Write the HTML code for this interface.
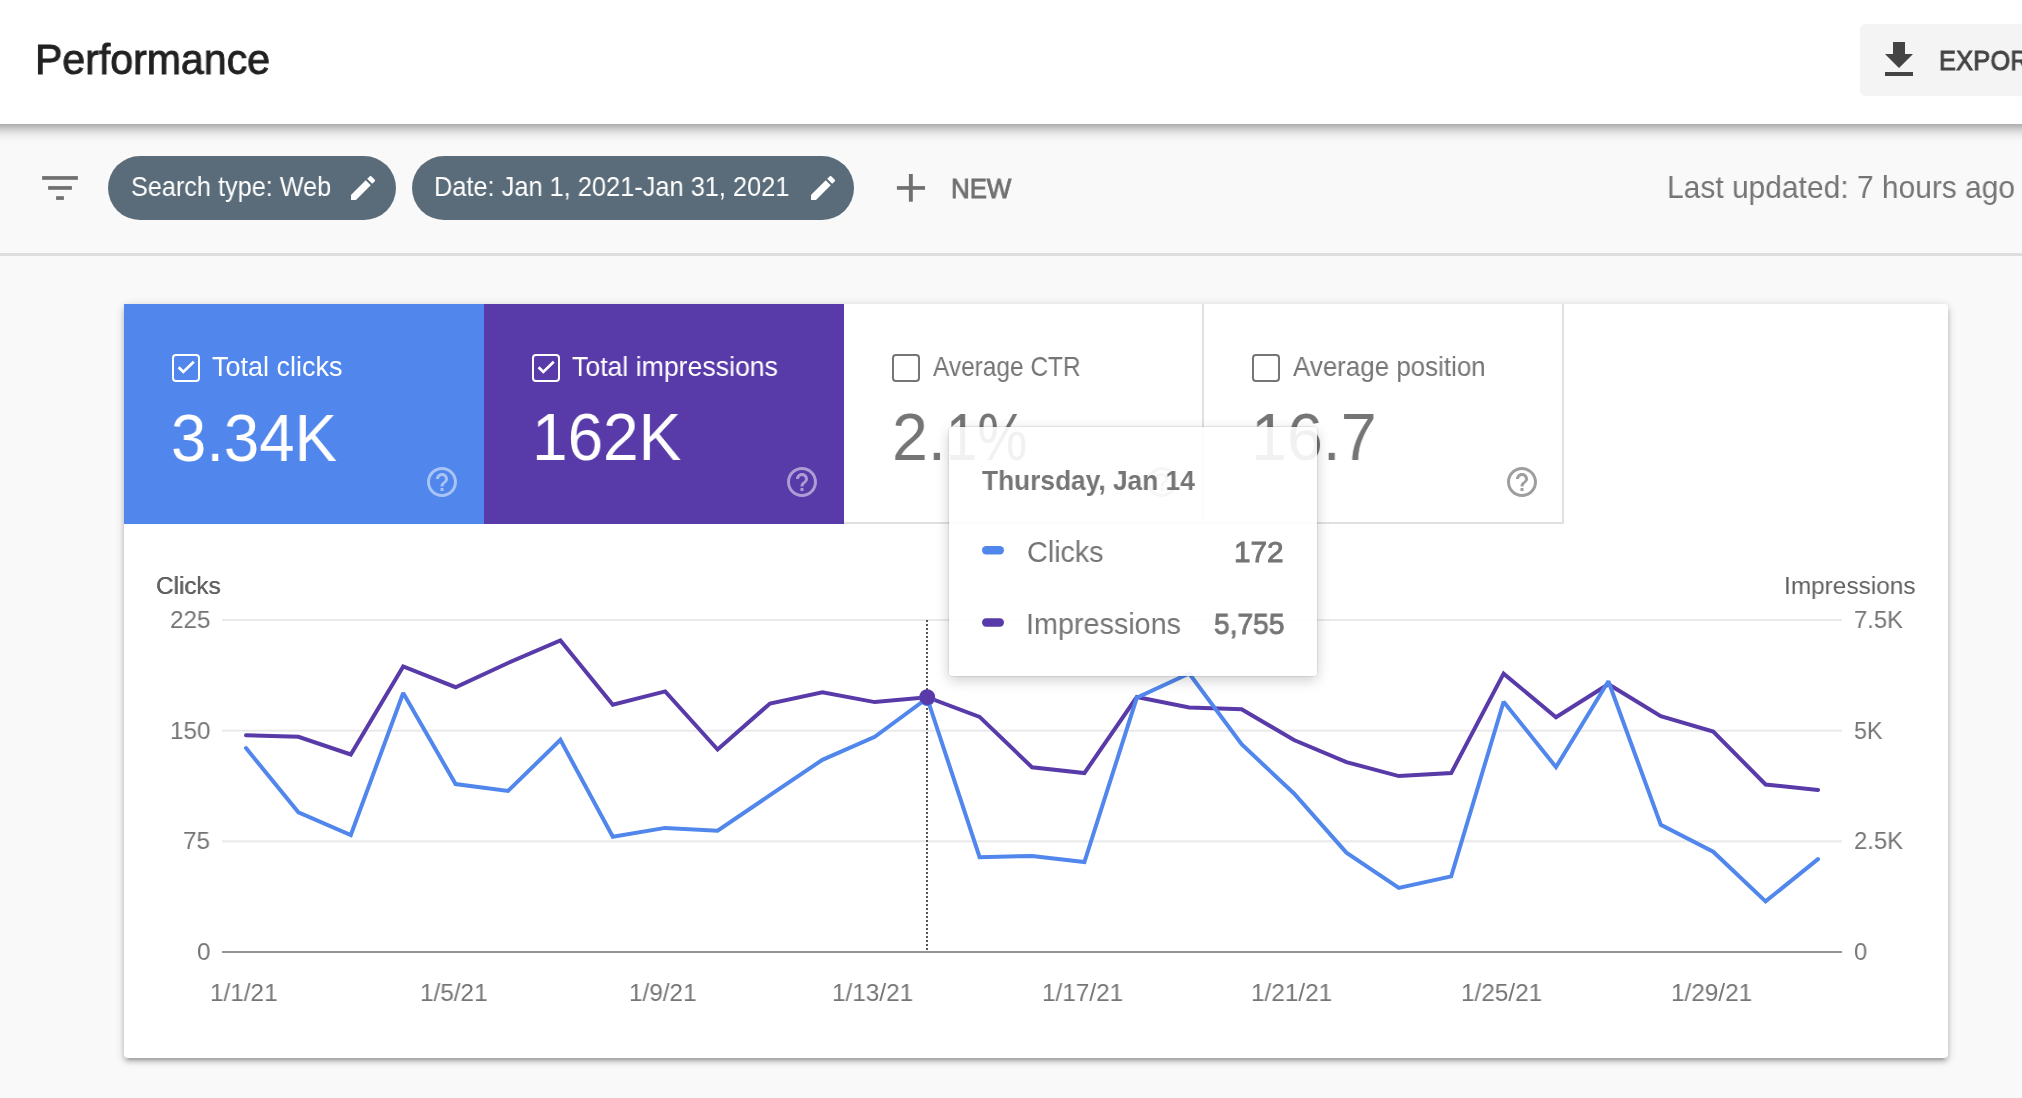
<!DOCTYPE html>
<html><head><meta charset="utf-8"><title>Performance</title>
<style>
html,body{margin:0;padding:0;}
body{width:2022px;height:1098px;overflow:hidden;position:relative;background:#f9f9f9;font-family:"Liberation Sans",sans-serif;}
.abs{position:absolute;left:0;top:0;}
.t{position:absolute;white-space:nowrap;transform-origin:0 0;will-change:transform;}
#hdr{position:absolute;left:-40px;top:0;width:2102px;height:124px;background:#fff;box-shadow:0 4px 8px -2px rgba(0,0,0,.2),0 8px 10px 0 rgba(0,0,0,.14),0 2px 20px 0 rgba(0,0,0,.12);z-index:2;}
#exp{position:absolute;left:1860px;top:24px;width:200px;height:72px;border-radius:6px;background:#f4f4f4;}
#rule{position:absolute;left:0;top:253px;width:2022px;height:3px;background:#dedede;}
.chip{position:absolute;top:156px;height:64px;border-radius:32px;background:#5a6c79;}
#panel{position:absolute;left:124px;top:304px;width:1824px;height:754px;background:#fff;border-radius:4px;box-shadow:0 4px 4px 0 rgba(0,0,0,.14),0 6px 2px -4px rgba(0,0,0,.12),0 2px 10px 0 rgba(0,0,0,.2);}
.card{position:absolute;top:304px;height:220px;width:360px;box-sizing:border-box;}
#tip{position:absolute;left:949px;top:427px;width:368px;height:249px;box-sizing:border-box;border-radius:4px;background:rgba(255,255,255,.9);box-shadow:0 0 0 1px rgba(0,0,0,.07),0 4px 14px rgba(0,0,0,.2);z-index:5;}
#tipc{position:absolute;left:0;top:0;z-index:6;}
</style></head><body>
<div id="hdr"></div>
<div class="abs" style="z-index:3">
 <div class="t" style="left:35.38px;top:39.00px;font-size:42.15px;line-height:42.15px;font-weight:400;color:#212121;transform:scaleX(0.9742);-webkit-text-stroke:0.9px #212121;">Performance</div>
 <div id="exp"></div>
 <svg class="abs" style="left:1875px;top:35.7px" width="48" height="48" viewBox="0 0 24 24"><path fill="#444" d="M19 9h-4V3H9v6H5l7 7 7-7zM5 18v2h14v-2H5z"/></svg>
 <div class="t" style="left:1938.82px;top:48.00px;font-size:26.90px;line-height:26.90px;font-weight:400;color:#444444;transform:scaleX(0.9400);-webkit-text-stroke:1px #444444;letter-spacing:0.3px;">EXPORT</div>
</div>
<svg class="abs" width="100" height="220"><g fill="#707070"><rect x="42.1" y="176.1" width="35.8" height="3.7"/><rect x="48.1" y="186.1" width="23.8" height="3.7"/><rect x="56.1" y="196.2" width="7.8" height="3.7"/></g></svg>
<div class="chip" style="left:108px;width:288px"></div>
<div class="chip" style="left:412px;width:442px"></div>
<div class="t" style="left:130.96px;top:173.00px;font-size:27.40px;line-height:27.40px;font-weight:400;color:#ffffff;transform:scaleX(0.9215);">Search type: Web</div><div class="t" style="left:433.95px;top:173.00px;font-size:27.40px;line-height:27.40px;font-weight:400;color:#ffffff;transform:scaleX(0.9263);">Date: Jan 1, 2021-Jan 31, 2021</div>
<svg class="abs" style="left:346.8px;top:171.6px" width="32" height="32" viewBox="0 0 24 24"><path fill="#fff" d="M3 17.25V21h3.75L17.81 9.94l-3.75-3.75L3 17.25zM20.71 7.04c.39-.39.39-1.02 0-1.41l-2.34-2.34c-.39-.39-1.02-.39-1.41 0l-1.83 1.83 3.75 3.75 1.83-1.83z"/></svg>
<svg class="abs" style="left:806.6px;top:171.6px" width="32" height="32" viewBox="0 0 24 24"><path fill="#fff" d="M3 17.25V21h3.75L17.81 9.94l-3.75-3.75L3 17.25zM20.71 7.04c.39-.39.39-1.02 0-1.41l-2.34-2.34c-.39-.39-1.02-.39-1.41 0l-1.83 1.83 3.75 3.75 1.83-1.83z"/></svg>
<svg class="abs" width="960" height="220"><g fill="#707070"><rect x="896.9" y="186.1" width="28.1" height="3.7"/><rect x="908.9" y="174" width="3.9" height="27.7"/></g></svg>
<div class="t" style="left:950.70px;top:175.00px;font-size:27.20px;line-height:27.20px;font-weight:400;color:#707070;transform:scaleX(0.9492);-webkit-text-stroke:0.9px #707070;">NEW</div>
<div class="t" style="left:1666.98px;top:172.00px;font-size:31.90px;line-height:31.90px;font-weight:400;color:#757575;transform:scaleX(0.9393);">Last updated: 7 hours ago</div>
<div id="rule"></div>
<div id="panel"></div>
<div class="card" style="left:124px;background:#5187ec"></div>
<div class="card" style="left:484px;background:#583ba9"></div>
<div class="card" style="left:844px;border-right:2px solid #e0e0e0;border-bottom:2px solid #e0e0e0;width:360px"></div>
<div class="card" style="left:1204px;border-right:2px solid #e0e0e0;border-bottom:2px solid #e0e0e0;width:360px"></div>
<svg class="abs" style="left:172px;top:354px" width="28" height="28" viewBox="0 0 28 28"><rect x="1" y="1" width="26" height="26" rx="3" ry="3" fill="none" stroke="#fff" stroke-width="2"/><polyline points="6.6,13.3 11.3,17.9 21.8,7.7" fill="none" stroke="#fff" stroke-width="2.7"/></svg><div class="t" style="left:212.00px;top:354.00px;font-size:26.90px;line-height:26.90px;font-weight:400;color:#ffffff;transform:scaleX(1.0047);">Total clicks</div><div class="t" style="left:171.27px;top:404.00px;font-size:67.30px;line-height:67.30px;font-weight:400;color:#ffffff;transform:scaleX(0.9436);">3.34K</div><svg class="abs" style="left:424.1px;top:464px" width="36" height="36" viewBox="0 0 24 24"><path fill="rgba(255,255,255,.5)" d="M11 18h2v-2h-2v2zm1-16C6.48 2 2 6.48 2 12s4.48 10 10 10 10-4.48 10-10S17.52 2 12 2zm0 18c-4.41 0-8-3.59-8-8s3.59-8 8-8 8 3.59 8 8-3.59 8-8 8zm0-14c-2.21 0-4 1.79-4 4h2c0-1.1.9-2 2-2s2 .9 2 2c0 2-3 1.75-3 5h2c0-2.25 3-2.5 3-5 0-2.21-1.79-4-4-4z"/></svg>
<svg class="abs" style="left:532px;top:354px" width="28" height="28" viewBox="0 0 28 28"><rect x="1" y="1" width="26" height="26" rx="3" ry="3" fill="none" stroke="#fff" stroke-width="2"/><polyline points="6.6,13.3 11.3,17.9 21.8,7.7" fill="none" stroke="#fff" stroke-width="2.7"/></svg><div class="t" style="left:571.91px;top:354.00px;font-size:26.90px;line-height:26.90px;font-weight:400;color:#ffffff;transform:scaleX(0.9913);">Total impressions</div><div class="t" style="left:531.75px;top:403.00px;font-size:67.30px;line-height:67.30px;font-weight:400;color:#ffffff;transform:scaleX(0.9497);">162K</div><svg class="abs" style="left:784px;top:464px" width="36" height="36" viewBox="0 0 24 24"><path fill="rgba(255,255,255,.5)" d="M11 18h2v-2h-2v2zm1-16C6.48 2 2 6.48 2 12s4.48 10 10 10 10-4.48 10-10S17.52 2 12 2zm0 18c-4.41 0-8-3.59-8-8s3.59-8 8-8 8 3.59 8 8-3.59 8-8 8zm0-14c-2.21 0-4 1.79-4 4h2c0-1.1.9-2 2-2s2 .9 2 2c0 2-3 1.75-3 5h2c0-2.25 3-2.5 3-5 0-2.21-1.79-4-4-4z"/></svg>
<svg class="abs" style="left:892px;top:354px" width="28" height="28" viewBox="0 0 28 28"><rect x="1" y="1" width="26" height="26" rx="3" ry="3" fill="none" stroke="#757575" stroke-width="2"/></svg><div class="t" style="left:932.70px;top:354.00px;font-size:26.90px;line-height:26.90px;font-weight:400;color:#757575;transform:scaleX(0.9087);">Average CTR</div><div class="t" style="left:891.73px;top:403.00px;font-size:67.30px;line-height:67.30px;font-weight:400;color:#757575;transform:scaleX(0.9574);">2.</div><div class="t" style="left:945.82px;top:403.00px;font-size:67.30px;line-height:67.30px;font-weight:400;color:#757575;transform:scaleX(0.8367);">1%</div><svg class="abs" style="left:1144px;top:464px" width="36" height="36" viewBox="0 0 24 24"><path fill="#9e9e9e" d="M11 18h2v-2h-2v2zm1-16C6.48 2 2 6.48 2 12s4.48 10 10 10 10-4.48 10-10S17.52 2 12 2zm0 18c-4.41 0-8-3.59-8-8s3.59-8 8-8 8 3.59 8 8-3.59 8-8 8zm0-14c-2.21 0-4 1.79-4 4h2c0-1.1.9-2 2-2s2 .9 2 2c0 2-3 1.75-3 5h2c0-2.25 3-2.5 3-5 0-2.21-1.79-4-4-4z"/></svg>
<svg class="abs" style="left:1252px;top:354px" width="28" height="28" viewBox="0 0 28 28"><rect x="1" y="1" width="26" height="26" rx="3" ry="3" fill="none" stroke="#757575" stroke-width="2"/></svg><div class="t" style="left:1292.70px;top:354.00px;font-size:26.90px;line-height:26.90px;font-weight:400;color:#757575;transform:scaleX(0.9641);">Average position</div><div class="t" style="left:1251.20px;top:403.00px;font-size:67.30px;line-height:67.30px;font-weight:400;color:#757575;transform:scaleX(0.9593);">16.7</div><svg class="abs" style="left:1504.1px;top:464px" width="36" height="36" viewBox="0 0 24 24"><path fill="#9e9e9e" d="M11 18h2v-2h-2v2zm1-16C6.48 2 2 6.48 2 12s4.48 10 10 10 10-4.48 10-10S17.52 2 12 2zm0 18c-4.41 0-8-3.59-8-8s3.59-8 8-8 8 3.59 8 8-3.59 8-8 8zm0-14c-2.21 0-4 1.79-4 4h2c0-1.1.9-2 2-2s2 .9 2 2c0 2-3 1.75-3 5h2c0-2.25 3-2.5 3-5 0-2.21-1.79-4-4-4z"/></svg>
<div class="t" style="left:155.82px;top:574.00px;font-size:24.80px;line-height:24.80px;font-weight:400;color:#616161;transform:scaleX(0.9781);">Clicks</div><div class="t" style="left:1783.93px;top:574.00px;font-size:24.80px;line-height:24.80px;font-weight:400;color:#616161;transform:scaleX(0.9840);">Impressions</div>
<div class="t" style="left:155.82px;top:574.00px;font-size:24.80px;line-height:24.80px;font-weight:400;color:#616161;transform:scaleX(0.9781);">Clicks</div><div class="t" style="left:196.56px;top:940.00px;font-size:24.80px;line-height:24.80px;font-weight:400;color:#757575;transform:scaleX(0.9800);">0</div><div class="t" style="left:182.84px;top:829.00px;font-size:24.80px;line-height:24.80px;font-weight:400;color:#757575;transform:scaleX(0.9800);">75</div><div class="t" style="left:170.10px;top:719.00px;font-size:24.80px;line-height:24.80px;font-weight:400;color:#757575;transform:scaleX(0.9800);">150</div><div class="t" style="left:170.10px;top:608.00px;font-size:24.80px;line-height:24.80px;font-weight:400;color:#757575;transform:scaleX(0.9800);">225</div><div class="t" style="left:1854.04px;top:940.00px;font-size:24.80px;line-height:24.80px;font-weight:400;color:#757575;transform:scaleX(0.9583);">0</div><div class="t" style="left:1854.04px;top:829.00px;font-size:24.80px;line-height:24.80px;font-weight:400;color:#757575;transform:scaleX(0.9612);">2.5K</div><div class="t" style="left:1854.06px;top:719.00px;font-size:24.80px;line-height:24.80px;font-weight:400;color:#757575;transform:scaleX(0.9414);">5K</div><div class="t" style="left:1854.04px;top:608.00px;font-size:24.80px;line-height:24.80px;font-weight:400;color:#757575;transform:scaleX(0.9592);">7.5K</div><div class="t" style="left:210.20px;top:981.00px;font-size:24.80px;line-height:24.80px;font-weight:400;color:#757575;transform:scaleX(0.9800);">1/1/21</div><div class="t" style="left:419.80px;top:981.00px;font-size:24.80px;line-height:24.80px;font-weight:400;color:#757575;transform:scaleX(0.9800);">1/5/21</div><div class="t" style="left:629.40px;top:981.00px;font-size:24.80px;line-height:24.80px;font-weight:400;color:#757575;transform:scaleX(0.9800);">1/9/21</div><div class="t" style="left:832.14px;top:981.00px;font-size:24.80px;line-height:24.80px;font-weight:400;color:#757575;transform:scaleX(0.9800);">1/13/21</div><div class="t" style="left:1041.74px;top:981.00px;font-size:24.80px;line-height:24.80px;font-weight:400;color:#757575;transform:scaleX(0.9800);">1/17/21</div><div class="t" style="left:1251.34px;top:981.00px;font-size:24.80px;line-height:24.80px;font-weight:400;color:#757575;transform:scaleX(0.9800);">1/21/21</div><div class="t" style="left:1460.94px;top:981.00px;font-size:24.80px;line-height:24.80px;font-weight:400;color:#757575;transform:scaleX(0.9800);">1/25/21</div><div class="t" style="left:1670.54px;top:981.00px;font-size:24.80px;line-height:24.80px;font-weight:400;color:#757575;transform:scaleX(0.9800);">1/29/21</div>
<svg class="abs" width="2022" height="1098" viewBox="0 0 2022 1098">
<g fill="#e9e9e9">
<rect x="222" y="619" width="1620" height="2"/>
<rect x="222" y="729.67" width="1620" height="2"/>
<rect x="222" y="840.33" width="1620" height="2"/>
</g>
<rect x="222" y="951" width="1620" height="2" fill="#959595"/>
<line x1="927" y1="620" x2="927" y2="951" stroke="#555" stroke-width="2" stroke-dasharray="2 2"/>
<polyline points="246.0,735.3 298.4,736.8 350.8,754.5 403.2,666.4 455.6,687.2 508.0,663.0 560.4,640.5 612.8,704.7 665.2,691.4 717.6,749.5 770.0,703.5 822.4,692.2 874.8,702.1 927.2,697.2 979.6,716.9 1032.0,767.3 1084.4,773.1 1136.8,697.0 1189.2,707.5 1241.6,709.3 1294.0,740.0 1346.4,762.1 1398.8,776.1 1451.2,773.1 1503.6,673.6 1556.0,717.2 1608.4,684.2 1660.8,716.2 1713.2,731.5 1765.6,784.5 1818.0,790.0" fill="none" stroke="#583ba9" stroke-width="4" stroke-linejoin="miter" stroke-miterlimit="2" stroke-linecap="round"/>
<polyline points="246.0,748.1 298.4,812.3 350.8,835.0 403.2,693.0 455.6,784.1 508.0,791.0 560.4,739.9 612.8,836.7 665.2,827.9 717.6,830.7 770.0,795.2 822.4,759.8 874.8,736.8 927.2,698.2 979.6,857.2 1032.0,856.0 1084.4,862.0 1136.8,697.8 1189.2,673.5 1241.6,744.2 1294.0,793.5 1346.4,852.7 1398.8,887.9 1451.2,876.4 1503.6,701.7 1556.0,767.1 1608.4,681.3 1660.8,824.9 1713.2,851.7 1765.6,901.4 1818.0,859.1" fill="none" stroke="#5187ec" stroke-width="4" stroke-linejoin="miter" stroke-miterlimit="2" stroke-linecap="round"/>
<circle cx="927.2" cy="698.2" r="8" fill="#5187ec"/>
<circle cx="927.2" cy="697.2" r="8" fill="#583ba9"/>
</svg>
<div id="tip"></div>
<div id="tipc">
<div class="t" style="left:982.00px;top:466.00px;font-size:28.50px;line-height:28.50px;font-weight:700;color:#757575;transform:scaleX(0.9221);">Thursday, Jan 14</div>
<svg class="abs" width="1010" height="640"><rect x="982" y="546" width="22" height="8.5" rx="4.2" fill="#5187ec"/><rect x="982" y="618.2" width="22" height="8.5" rx="4.2" fill="#583ba9"/></svg>
<div class="t" style="left:1027.02px;top:538.00px;font-size:29.00px;line-height:29.00px;font-weight:400;color:#757575;transform:scaleX(0.9905);">Clicks</div><div class="t" style="left:1234.45px;top:538.00px;font-size:29.00px;line-height:29.00px;font-weight:400;color:#757575;transform:scaleX(1.0267);-webkit-text-stroke:0.9px #757575;">172</div><div class="t" style="left:1026.03px;top:610.00px;font-size:29.00px;line-height:29.00px;font-weight:400;color:#757575;transform:scaleX(0.9914);">Impressions</div><div class="t" style="left:1213.83px;top:610.00px;font-size:29.00px;line-height:29.00px;font-weight:400;color:#757575;transform:scaleX(0.9700);-webkit-text-stroke:0.9px #757575;">5,755</div>
</div>
</body></html>
